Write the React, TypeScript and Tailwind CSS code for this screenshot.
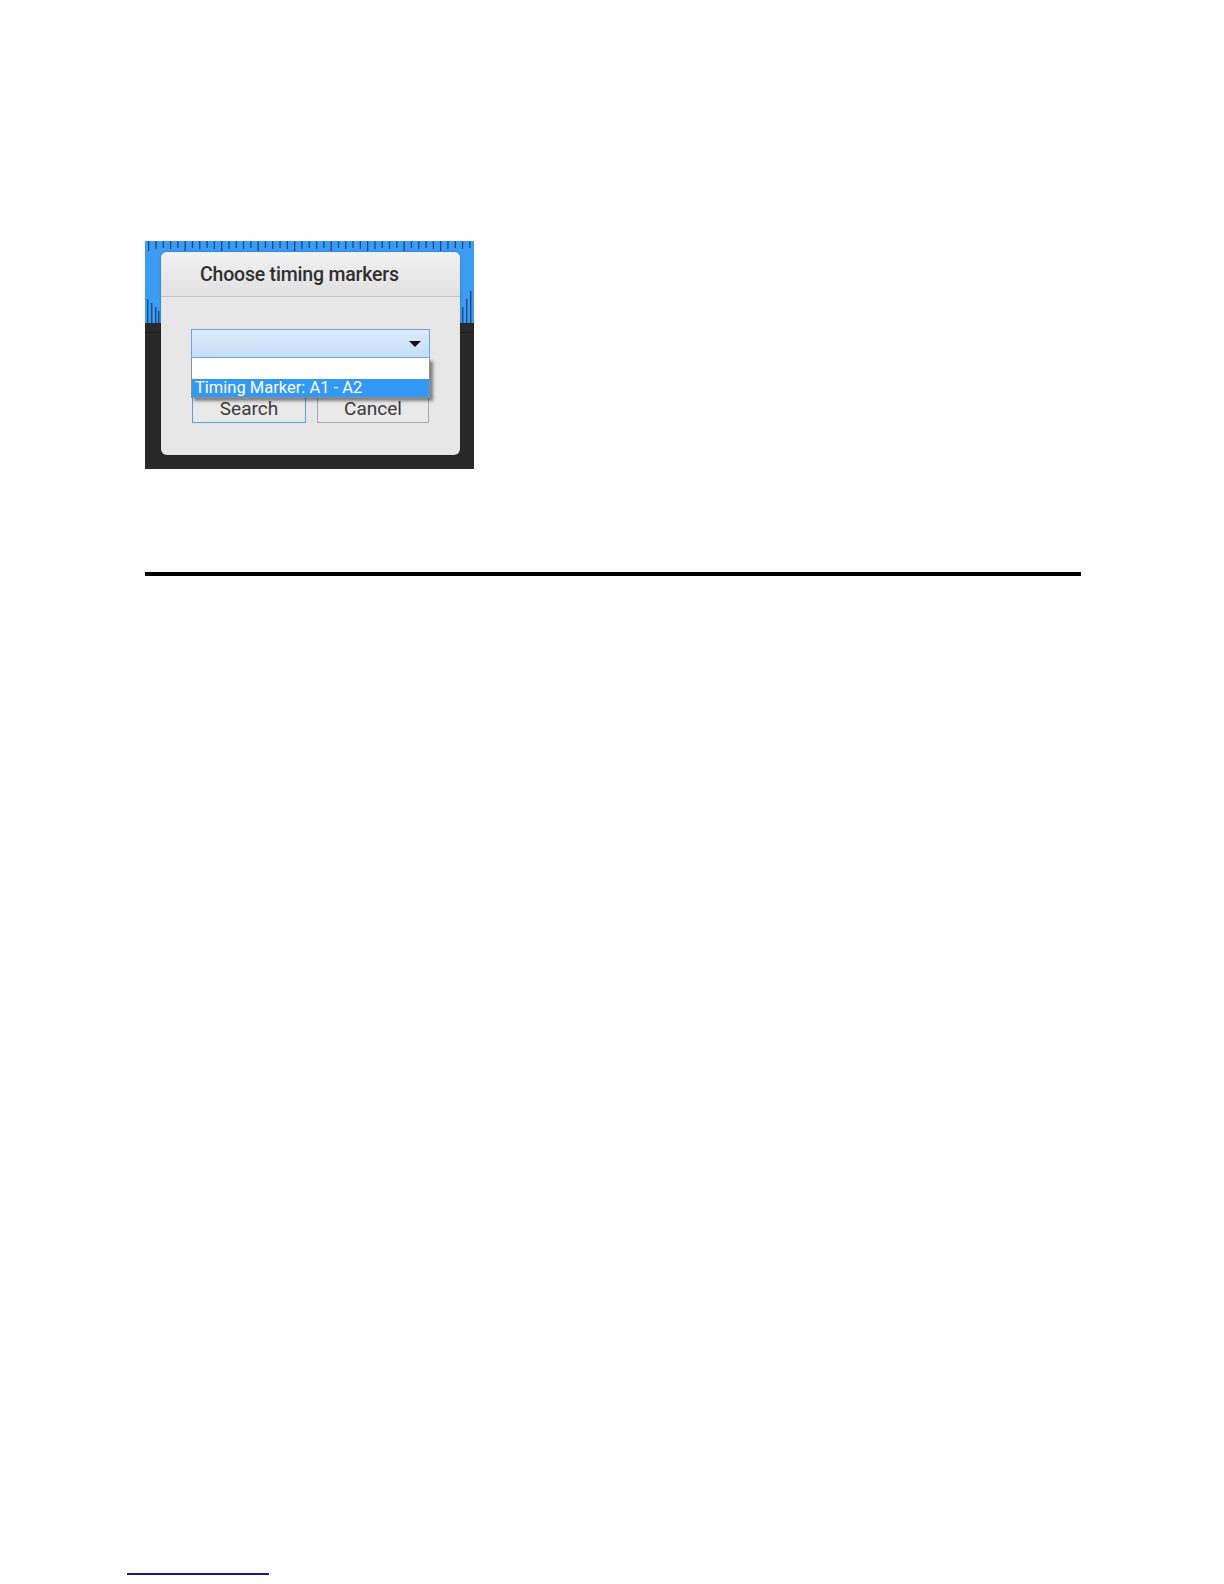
import React from "react";

const topTicks = Array.from({ length: 45 }, (_, i) => i);

function Ticks() {
  return (
    <svg width="329" height="82" className="absolute left-0 top-0" viewBox="0 0 329 82">
      {topTicks.map((i) => {
        const x = 3 + i * 7.3;
        const h = i % 5 === 0 ? 10 : i % 2 === 0 ? 7 : 8;
        return <rect key={"t" + i} x={x} y={0} width={1.3} height={h} fill="#1b4a80" />;
      })}
      {[2, 6, 10, 13].map((x, i) => (
        <rect key={"bl" + i} x={x} y={58 + i * 4} width={1.4} height={24 - i * 4} fill="#1b4a80" />
      ))}
      {[317, 321, 325].map((x, i) => (
        <rect key={"br" + i} x={x} y={66 - i * 8} width={1.4} height={16 + i * 8} fill="#1b4a80" />
      ))}
    </svg>
  );
}

export default function App() {
  return (
    <div
      className="relative w-[1224px] h-[1584px] bg-[#fefefe] overflow-hidden"
      style={{ fontFamily: "Roboto, 'Liberation Sans', sans-serif" }}
    >
      <div className="pl-[145px] pt-[241px]">
        <div className="relative w-[329px] h-[228px] flex flex-col">
          <div className="relative h-[82px] bg-[#3c9cf4]">
            <Ticks />
          </div>
          <div className="flex-1 bg-[#292929] flex flex-col">
            <div className="h-[9px]" />
            <div className="h-px bg-[#1c1c1c]" />
          </div>

          {/* Dialog */}
          <div className="absolute left-[16px] top-[11px] w-[299px] h-[203px] rounded-[6px] bg-[#e7e7e7] flex flex-col shadow-[0_0_2px_rgba(0,0,0,0.4)]">
            <div className="h-[45px] rounded-t-[6px] bg-gradient-to-b from-[#f1f1f1] to-[#e1e1e1] border-b border-[#c6c6c6] flex items-center pl-[39px] pt-[2px]">
              <span className="text-[19.5px] font-medium text-[#2f2f2f] tracking-[-0.2px]">Choose timing markers</span>
            </div>
            <div className="relative pl-[30px] pt-[32px]">
              <div className="w-[239px] h-[29px] border border-[#6aa7e6] bg-gradient-to-b from-[#ddebfb] to-[#c5ddf7] flex items-center justify-end pr-[8px]">
                <svg width="12" height="6" viewBox="0 0 12 6">
                  <path d="M0 0 L12 0 L6 6 Z" fill="#111" />
                </svg>
              </div>
              <div className="flex gap-[11px] mt-[38px] pl-px">
                <div className="w-[114px] h-[27px] border border-[#5c9ee6] bg-[#e9e9e9] flex items-center justify-center text-[19px] text-[#3a3a3a]">
                  Search
                </div>
                <div className="w-[112px] h-[27px] border border-[#a9a9a9] bg-[#e9e9e9] flex items-center justify-center text-[19px] text-[#3a3a3a]">
                  Cancel
                </div>
              </div>
              {/* Dropdown list */}
              <div className="absolute left-[30px] top-[61px] w-[239px] flex flex-col border-x border-b border-[#8f8f8f] shadow-[3px_3px_3px_rgba(0,0,0,0.45)]">
                <div className="h-[21px] bg-white" />
                <div className="h-[18px] bg-[#3399f7] text-white text-[16.5px] leading-[18px] pl-[3px] whitespace-nowrap">
                  Timing Marker: A1 - A2
                </div>
              </div>
            </div>
          </div>
        </div>

        <div className="mt-[103px] w-[936px] h-[4px] bg-black" />
      </div>

      <div className="absolute left-[127px] top-[1573px] w-[142px] h-[2px] bg-[#1a1a80]" />
    </div>
  );
}
